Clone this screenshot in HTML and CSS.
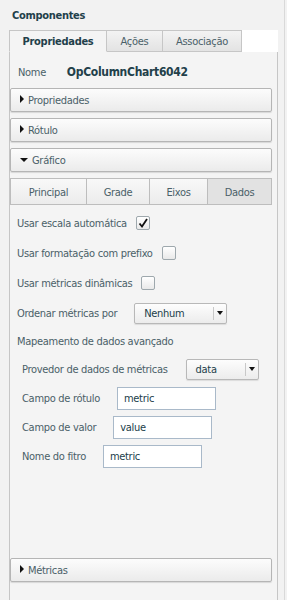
FILE: index.html
```html
<!DOCTYPE html>
<html lang="pt">
<head>
  <meta charset="UTF-8" />
  <title>Componentes</title>
  <link rel="stylesheet" href="styles.css">
</head>
<body>
  <div class="sidebar">
    <div class="title">Componentes</div>

    <div class="tabs">
      <div class="tab active">Propriedades</div>
      <div class="tab">Ações</div>
      <div class="tab">Associação</div>
    </div>

    <div class="panel">
      <div class="name-row">
        <span class="label">Nome</span>
        <span class="comp-name">OpColumnChart6042</span>
      </div>

      <div class="acc-header"><span class="arrow right"></span>Propriedades</div>
      <div class="acc-header"><span class="arrow right"></span>Rótulo</div>
      <div class="acc-header"><span class="arrow down"></span>Gráfico</div>

      <div class="subtabs">
        <div class="subtab" style="width:77px">Principal</div>
        <div class="subtab" style="width:63px">Grade</div>
        <div class="subtab" style="width:58px">Eixos</div>
        <div class="subtab active">Dados</div>
      </div>

      <div class="row">
        Usar escala automática
        <span class="check">
          <svg width="12" height="12" viewBox="0 0 12 12"><path d="M2.5 6.5 L5 9.5 L10 2" fill="none" stroke="#111" stroke-width="1.8"/></svg>
        </span>
      </div>
      <div class="row">Usar formatação com prefixo <span class="check"></span></div>
      <div class="row">Usar métricas dinâmicas <span class="check"></span></div>

      <div class="row">
        Ordenar métricas por
        <div class="select sel-order">
          <span class="sel-text">Nenhum</span>
          <span class="sel-btn"><span class="arrow down"></span></span>
        </div>
      </div>

      <div class="row short">Mapeamento de dados avançado</div>

      <div class="sub">
        <div class="row">
          Provedor de dados de métricas
          <div class="select sel-data">
            <span class="sel-text">data</span>
            <span class="sel-btn"><span class="arrow down"></span></span>
          </div>
        </div>
        <div class="row field">Campo de rótulo <input type="text" value="metric"></div>
        <div class="row field">Campo de valor <input type="text" value="value"></div>
        <div class="row field">Nome do fitro <input type="text" value="metric"></div>
      </div>

      <div class="acc-header bottom"><span class="arrow right"></span>Métricas</div>
    </div>
  </div>
</body>
</html>
```

FILE: styles.css
```css
* {
  box-sizing: border-box;
}

body {
  margin: 0;
  background: #f2f2f2;
  font-family: "DejaVu Sans Condensed", "DejaVu Sans", sans-serif;
  font-stretch: condensed;
  font-size: 11px;
  letter-spacing: -0.3px;
  color: #4a6068;
}

.sidebar {
  width: 285px;
  height: 600px;
  border-right: 1px solid #d9d9d9;
  display: flex;
  flex-direction: column;
}

.title {
  height: 30px;
  padding: 9px 0 0 12px;
  font-weight: bold;
  color: #22404a;
}

.tabs {
  display: flex;
  margin-left: 9px;
  width: 269px;
  height: 22px;
  background: #fff;
}

.tab {
  height: 22px;
  padding-top: 4px;
  text-align: center;
  border: 1px solid #c6c6c6;
  border-left: none;
  border-bottom: 1px solid #c6c6c6;
  background: linear-gradient(#f3f3f3, #e3e3e3);
}

.tab:nth-child(1) { width: 98px; border-left: 1px solid #c6c6c6; }
.tab:nth-child(2) { width: 56px; }
.tab:nth-child(3) { width: 79px; }

.tab.active {
  background: #f4f4f4;
  border-bottom-color: #f4f4f4;
  font-weight: bold;
  color: #22404a;
}

.panel {
  flex: 1;
  margin-left: 9px;
  width: 269px;
  border-left: 1px solid #c6c6c6;
  border-right: 1px solid #c6c6c6;
  background: #f4f4f4;
  display: flex;
  flex-direction: column;
  padding-right: 5px;
}

.name-row {
  height: 36px;
  padding: 13px 0 0 8px;
}

.name-row .label {
  display: inline-block;
  width: 46px;
}

.comp-name {
  font-weight: bold;
  font-size: 12px;
  color: #22404a;
}

.acc-header {
  height: 24px;
  margin-bottom: 6px;
  padding: 5px 0 0 9px;
  border: 1px solid #b5b5b5;
  border-radius: 2px;
  background: linear-gradient(#fcfcfc, #ebebeb);
  box-shadow: 0 1px 1px rgba(0, 0, 0, 0.12);
}

.acc-header.bottom {
  margin-top: auto;
  margin-bottom: 18px;
}

.arrow {
  display: inline-block;
  width: 0;
  height: 0;
  margin-right: 4px;
  vertical-align: 1px;
}

.arrow.right {
  border-top: 4px solid transparent;
  border-bottom: 4px solid transparent;
  border-left: 4px solid #111;
}

.arrow.down {
  border-left: 4px solid transparent;
  border-right: 4px solid transparent;
  border-top: 4px solid #111;
  vertical-align: 2px;
}

.subtabs {
  display: flex;
  height: 27px;
  margin-bottom: 3px;
}

.subtab {
  height: 27px;
  padding-top: 7px;
  text-align: center;
  border: 1px solid #bdbdbd;
  border-left: none;
  background: linear-gradient(#f8f8f8, #ececec);
}

.subtab:first-child {
  border-left: 1px solid #bdbdbd;
}

.subtab.active {
  flex: 1;
  background: #e2e2e2;
}

.row {
  height: 30px;
  padding-left: 7px;
  display: flex;
  align-items: center;
}

.row.short {
  height: 26px;
}

.check {
  width: 14px;
  height: 14px;
  margin-left: 9px;
  border: 1px solid #9ea8ad;
  border-radius: 2px;
  background: linear-gradient(#ffffff, #e9e9e9);
  display: flex;
  align-items: center;
  justify-content: center;
}

.select {
  display: flex;
  height: 21px;
  border: 1px solid #b8b8b8;
  border-radius: 2px;
  background: linear-gradient(#fdfdfd, #ececec);
  box-shadow: 0 1px 1px rgba(0, 0, 0, 0.1);
}

.sel-text {
  flex: 1;
  padding: 3px 0 0 9px;
  color: #22404a;
}

.sel-btn {
  flex: none;
  width: 13px;
  margin: 3px 0;
  border-left: 1px solid #c8c8c8;
  display: flex;
  align-items: center;
  justify-content: center;
}

.sel-btn .arrow {
  margin: 0;
  border-left-width: 3.5px;
  border-right-width: 3.5px;
  vertical-align: 0;
}

.sel-order {
  width: 93px;
  margin-left: 17px;
}

.sel-data {
  width: 73px;
  margin-left: 18px;
}

.sub .row {
  padding-left: 12px;
  height: 29px;
}

.sub .row:first-child {
  height: 30px;
}

.field input {
  width: 99px;
  height: 23px;
  margin-left: 17px;
  padding: 0 0 0 6px;
  border: 1px solid #a9b9c9;
  border-radius: 0;
  background: #fff;
  font-family: inherit;
  font-stretch: condensed;
  font-size: 11px;
  letter-spacing: -0.3px;
  color: #22404a;
}
```
